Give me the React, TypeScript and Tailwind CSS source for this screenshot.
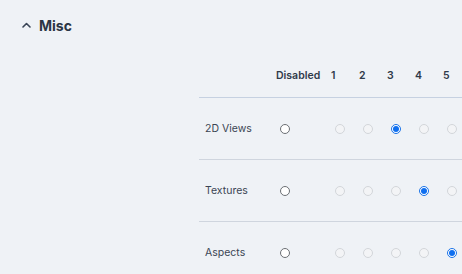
import React from 'react';

const levels = [1, 2, 3, 4, 5];

const rows = [
  { label: '2D Views', value: 3 },
  { label: 'Textures', value: 4 },
  { label: 'Aspects', value: 5 },
];

const Radio: React.FC<{ checked?: boolean; muted?: boolean }> = ({ checked, muted }) => {
  if (checked) {
    return (
      <span className="ml-[10px] flex h-[10px] w-[10px] items-center justify-center rounded-full border border-[#1a73e8] bg-white">
        <span className="h-[6px] w-[6px] rounded-full bg-[#0f6ff0]" />
      </span>
    );
  }
  return (
    <span
      className={`ml-[10px] block h-[10px] w-[10px] rounded-full border ${
        muted ? 'border-[#d3d6da] bg-[#f3f4f6]' : 'border-[#6b6f74] bg-white'
      }`}
    />
  );
};

const App: React.FC = () => {
  return (
    <div className="h-[274px] w-[462px] overflow-hidden bg-[#eff2f6] font-['Inter','Liberation_Sans',sans-serif]">
      <div className="flex items-center gap-[8px] pl-[22px] pt-[16px]">
        <svg width="9" height="6" viewBox="0 0 9 6" fill="none" className="mt-[-2px]">
          <path d="M1 5L4.5 1.5L8 5" stroke="#3a4556" strokeWidth="1.6" strokeLinecap="round" strokeLinejoin="round" />
        </svg>
        <h2 className="text-[14px] font-bold leading-[20px] text-[#2b3544]">Misc</h2>
      </div>

      <div className="ml-[199px] mt-[18px] w-[266px]">
        <div className="grid h-[44px] grid-cols-[71px_55px_repeat(5,28px)] items-center border-b border-[#c6d1e1] text-[10.5px] font-semibold text-[#2f3a4a]">
          <div />
          <div className="pl-[6px]">Disabled</div>
          {levels.map((n) => (
            <div key={n} className="pl-[6px]">{n}</div>
          ))}
        </div>

        {rows.map((row, i) => (
          <div
            key={row.label}
            className={`grid h-[62px] grid-cols-[71px_55px_repeat(5,28px)] items-center ${
              i < rows.length - 1 ? 'border-b border-[#cfd5de]' : ''
            }`}
          >
            <div className="pl-[6px] text-[10.5px] text-[#3b4554]">{row.label}</div>
            <div>
              <Radio />
            </div>
            {levels.map((n) => (
              <div key={n}>
                <Radio muted checked={row.value === n} />
              </div>
            ))}
          </div>
        ))}
      </div>
    </div>
  );
};

export default App;
